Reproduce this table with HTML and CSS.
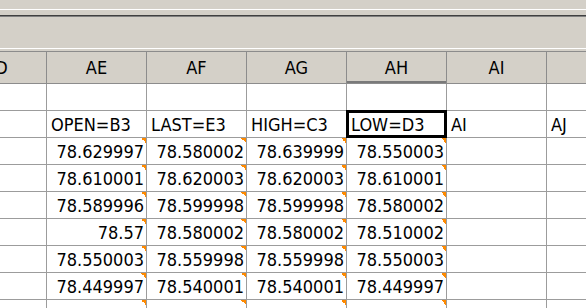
FILE: index.html
```html
<!DOCTYPE html>
<html lang="en">
<head>
  <meta charset="UTF-8">
  <title>Sheet</title>
  <link rel="stylesheet" href="styles.css">
</head>
<body>
  <div class="toolbar"></div>
  <div class="formula-bar"></div>
  <div class="gap"></div>

  <div class="sheet">
    <!-- column headers -->
    <div class="col-head">AD</div>
    <div class="col-head">AE</div>
    <div class="col-head">AF</div>
    <div class="col-head">AG</div>
    <div class="col-head active">AH</div>
    <div class="col-head">AI</div>
    <div class="col-head">AJ</div>

    <!-- row 1 -->
    <div class="cell"></div>
    <div class="cell"></div>
    <div class="cell"></div>
    <div class="cell"></div>
    <div class="cell"></div>
    <div class="cell"></div>
    <div class="cell"></div>

    <!-- row 2 -->
    <div class="cell"></div>
    <div class="cell">OPEN=B3</div>
    <div class="cell">LAST=E3</div>
    <div class="cell">HIGH=C3</div>
    <div class="cell selected">LOW=D3</div>
    <div class="cell">AI</div>
    <div class="cell">AJ</div>

    <!-- prices -->
    <div class="cell"></div>
    <div class="cell num">78.629997</div>
    <div class="cell num">78.580002</div>
    <div class="cell num">78.639999</div>
    <div class="cell num">78.550003</div>
    <div class="cell"></div>
    <div class="cell"></div>

    <div class="cell"></div>
    <div class="cell num">78.610001</div>
    <div class="cell num">78.620003</div>
    <div class="cell num">78.620003</div>
    <div class="cell num">78.610001</div>
    <div class="cell"></div>
    <div class="cell"></div>

    <div class="cell"></div>
    <div class="cell num">78.589996</div>
    <div class="cell num">78.599998</div>
    <div class="cell num">78.599998</div>
    <div class="cell num">78.580002</div>
    <div class="cell"></div>
    <div class="cell"></div>

    <div class="cell"></div>
    <div class="cell num">78.57</div>
    <div class="cell num">78.580002</div>
    <div class="cell num">78.580002</div>
    <div class="cell num">78.510002</div>
    <div class="cell"></div>
    <div class="cell"></div>

    <div class="cell"></div>
    <div class="cell num">78.550003</div>
    <div class="cell num">78.559998</div>
    <div class="cell num">78.559998</div>
    <div class="cell num">78.550003</div>
    <div class="cell"></div>
    <div class="cell"></div>

    <div class="cell"></div>
    <div class="cell num">78.449997</div>
    <div class="cell num">78.540001</div>
    <div class="cell num">78.540001</div>
    <div class="cell num">78.449997</div>
    <div class="cell"></div>
    <div class="cell"></div>

    <div class="cell"></div>
    <div class="cell num"></div>
    <div class="cell num"></div>
    <div class="cell num"></div>
    <div class="cell num"></div>
    <div class="cell"></div>
    <div class="cell"></div>
  </div>
</body>
</html>
```

FILE: styles.css
```css
body {
  margin: 0;
  background: #d4d0c8;
  font-family: "DejaVu Sans Condensed", "DejaVu Sans", sans-serif;
  font-stretch: condensed;
  font-size: 18px;
  color: #000;
  overflow: hidden;
  height: 308px;
}
.toolbar {
  height: 9px;
  border-bottom: 1px solid #fff;
}
.formula-bar {
  margin-top: 5px;
  height: 32px;
  border-top: 1px solid #404040;
  box-shadow: inset 0 1px 0 #808080;
  border-bottom: 1px solid #fff;
}
.gap {
  height: 2px;
}
.sheet {
  display: grid;
  grid-template-columns: 101px repeat(6, 100px);
  grid-template-rows: 32px;
  grid-auto-rows: 27px;
  margin-left: -54px;
  border-top: 1px solid #8c8c8c;
  background: #fff;
}
.col-head, .cell {
  box-sizing: border-box;
  border-right: 1px solid #9c9c9c;
  border-bottom: 1px solid #9c9c9c;
  white-space: nowrap;
  overflow: visible;
  display: flex;
  align-items: center;
}
.col-head {
  background: #d4d0c8;
  justify-content: center;
  border-color: #8c8c8c;
}
.col-head.active {
  box-shadow: inset 0 -2px 0 #7a7a7a;
}
.cell {
  padding: 0 4px;
  position: relative;
}
.num {
  justify-content: flex-end;
  padding-right: 2px;
}
.num::after {
  content: "";
  position: absolute;
  top: 0;
  right: 0;
  width: 5px;
  height: 5px;
  background: linear-gradient(to bottom left, #ff8a00 50%, transparent 50%);
}
.selected::before {
  content: "";
  position: absolute;
  top: -1px;
  left: -1px;
  right: -1px;
  bottom: -1px;
  border: 3px solid #000;
}
```
